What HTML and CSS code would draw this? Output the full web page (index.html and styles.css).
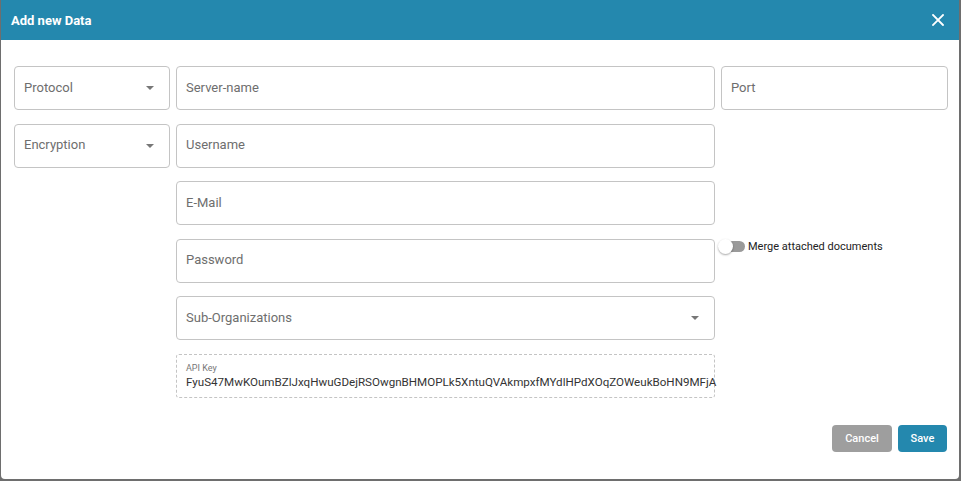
FILE: index.html
```html
<!DOCTYPE html>
<html>
<head>
<meta charset="utf-8">
<link rel="stylesheet" href="styles.css">
</head>
<body>
<div class="dialog">
  <div class="header">
    <span class="title">Add new Data</span>
    <svg class="close" width="12" height="12" viewBox="0 0 12 12"><path d="M1 1L11 11M11 1L1 11" stroke="#fff" stroke-width="1.8" stroke-linecap="square"/></svg>
  </div>
  <div class="body">
    <div class="grid">
      <div class="field select r1 c1"><span>Protocol</span><i class="arrow"></i></div>
      <div class="field r1 c2"><span>Server-name</span></div>
      <div class="field r1 c3"><span>Port</span></div>

      <div class="field select r2 c1"><span>Encryption</span><i class="arrow"></i></div>
      <div class="field r2 c2"><span>Username</span></div>

      <div class="field r3 c2"><span>E-Mail</span></div>

      <div class="field r4 c2"><span>Password</span></div>
      <div class="toggle-wrap r4 c3">
        <span class="toggle"><span class="knob"></span></span>
        <span class="toggle-label">Merge attached documents</span>
      </div>

      <div class="field select r5 c2"><span>Sub-Organizations</span><i class="arrow"></i></div>

      <div class="apikey r6 c2">
        <span class="api-label">API Key</span>
        <span class="api-value">FyuS47MwKOumBZlJxqHwuGDejRSOwgnBHMOPLk5XntuQVAkmpxfMYdlHPdXOqZOWeukBoHN9MFjA</span>
      </div>
    </div>
    <div class="actions">
      <button class="btn cancel">Cancel</button>
      <button class="btn save">Save</button>
    </div>
  </div>
</div>
</body>
</html>
```
FILE: styles.css
```css
html, body {
  margin: 0;
  padding: 0;
  height: 100%;
}
body {
  background: #6e6e6e;
  font-family: Roboto, "Liberation Sans", Arial, sans-serif;
  overflow: hidden;
}
.dialog {
  margin: 0 2px 0 1px;
  height: 479px;
  background: #fff;
  border-radius: 0 0 4px 4px;
  display: flex;
  flex-direction: column;
  overflow: hidden;
}
.header {
  height: 40px;
  background: #2488ae;
  display: flex;
  align-items: center;
  justify-content: space-between;
  padding: 0 15px 0 10px;
  flex: none;
}
.title {
  color: #fff;
  font-weight: 700;
  font-size: 13px;
}
.close {
  display: block;
}
.body {
  padding: 26px 12px 0 13px;
  display: flex;
  flex-direction: column;
}
.grid {
  display: grid;
  grid-template-columns: 156px 539px 227px;
  grid-template-rows: repeat(6, 44px);
  column-gap: 6px;
  row-gap: 13.6px;
}
.r1 { grid-row: 1; }
.r2 { grid-row: 2; }
.r3 { grid-row: 3; }
.r4 { grid-row: 4; }
.r5 { grid-row: 5; }
.r6 { grid-row: 6; }
.c1 { grid-column: 1; }
.c2 { grid-column: 2; }
.c3 { grid-column: 3; }
.field {
  border: 1px solid #c4c4c4;
  border-radius: 4px;
  display: flex;
  align-items: center;
  justify-content: space-between;
  padding: 0 15px 2px 9px;
  font-size: 13px;
  color: #6e6e6e;
  box-sizing: border-box;
}
.arrow {
  width: 0;
  height: 0;
  border-left: 4.5px solid transparent;
  border-right: 4.5px solid transparent;
  border-top: 4.5px solid #777;
  margin-top: 2px;
}
.toggle-wrap {
  display: flex;
  align-items: flex-start;
  padding-top: 1px;
  margin-left: -1px;
}
.toggle {
  position: relative;
  width: 24px;
  height: 11px;
  margin-top: 1px;
  background: #9a9a9a;
  border-radius: 6px;
  margin-left: 1px;
  margin-right: 3px;
  flex: none;
}
.knob {
  position: absolute;
  left: -3px;
  top: -2px;
  width: 15px;
  height: 15px;
  border-radius: 50%;
  background: #fff;
  box-shadow: 0 1px 2px rgba(0,0,0,0.35);
}
.toggle-label {
  font-size: 11px;
  color: #222;
  line-height: 13px;
}
.apikey {
  border: 1px dashed #c4c4c4;
  border-radius: 3px;
  display: flex;
  flex-direction: column;
  justify-content: center;
  padding: 0 9px;
  box-sizing: border-box;
}
.api-label {
  font-size: 9px;
  color: #777;
  line-height: 11px;
  margin-top: 2px;
}
.api-value {
  font-size: 11.6px;
  color: #333;
  line-height: 16px;
  white-space: nowrap;
}
.actions {
  display: flex;
  justify-content: flex-end;
  gap: 6px;
  margin-top: 27px;
}
.btn {
  border: none;
  border-radius: 4px;
  color: #fff;
  font-family: Roboto, "Liberation Sans", Arial, sans-serif;
  font-size: 11px;
  font-weight: 500;
  height: 27px;
  padding: 0 12px;
}
.cancel {
  background: #9e9e9e;
  width: 60px;
}
.save {
  background: #2488ae;
  width: 49px;
}
```
